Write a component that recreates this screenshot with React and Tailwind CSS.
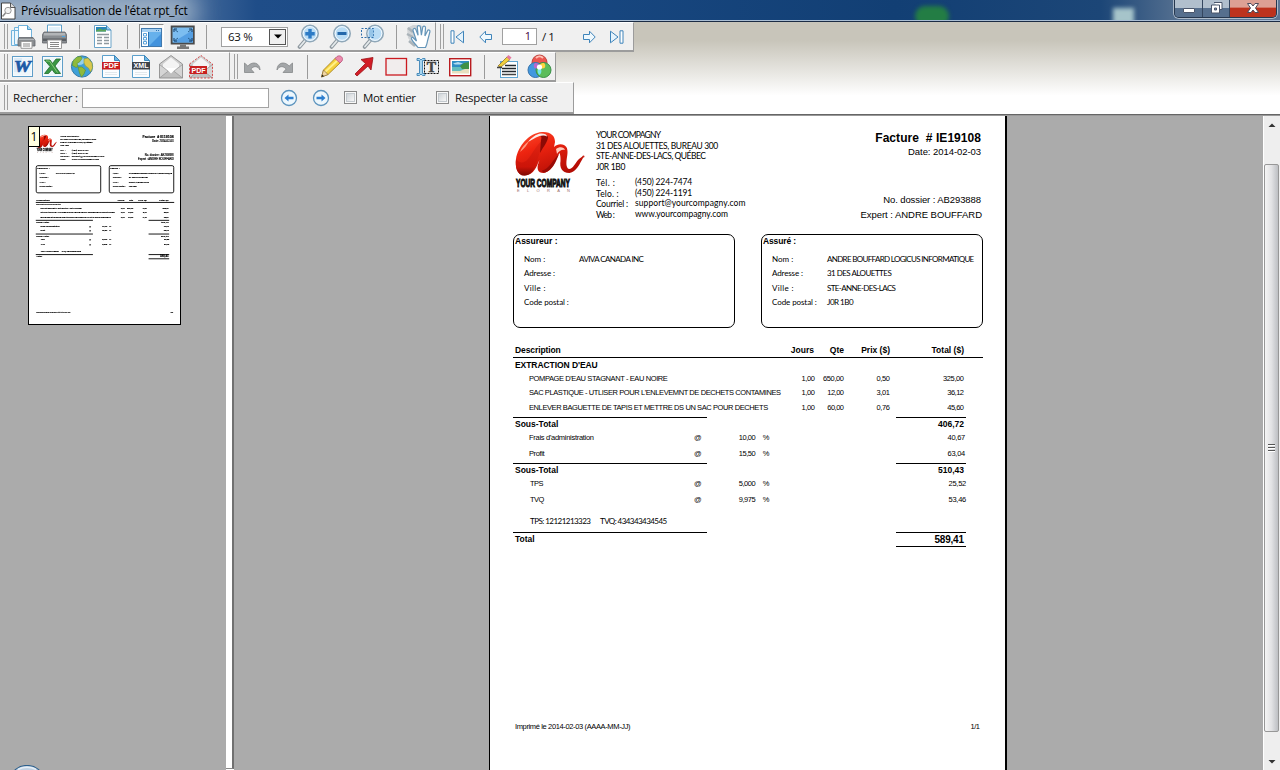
import { createContext, useContext, useLayoutEffect, useRef } from "react";

const ThumbContext = createContext(false);

/* Text tracked out (or in) to an exact run length, like the report engine does. */
function Fit({ w, children, className = "" }) {
  const ref = useRef(null);
  useLayoutEffect(() => {
    const el = ref.current;
    el.style.letterSpacing = "0px";
    const n = Math.max(1, children.length - 1);
    const ls = (w - el.offsetWidth) / n;
    el.style.letterSpacing = ls + "px";
    el.style.marginRight = -ls + "px";
  }, [w, children]);
  return (
    <span ref={ref} className={"inline-block shrink-0 whitespace-pre leading-none " + className}>
      {children}
    </span>
  );
}

/* ---------- toolbar parts ---------- */

function Toolbar({ className, children }) {
  return (
    <div className={"flex shrink-0 items-center border-b-2 border-r border-[#9c9c9c] border-t border-t-white bg-[#f0f0f0] " + className}>
      <div className="ml-1 mr-0.5 flex h-[25px] w-[4px] shrink-0 justify-between">
        <i className="w-px bg-[#a0a0a0]" />
        <i className="w-px bg-[#a0a0a0]" />
      </div>
      {children}
    </div>
  );
}

function Sep({ className }) {
  return <i className={"h-[24px] w-px shrink-0 bg-[#9a9a9a] " + className} />;
}

function Ico({ className = "", w = 26, children }) {
  return (
    <svg width={w} height="26" viewBox={`0 0 ${w} 26`} className={"shrink-0 " + className}>
      {children}
    </svg>
  );
}

function PrinterShape() {
  return (
    <g>
      <path d="M5.500 1h14v9h-14z" fill="#fff" stroke="#5d9fca" />
      <path d="M7 3h11v4H7z" fill="#e3f1fa" />
      <path d="M2 8h21l1.500 2.500V19H.5v-8.500z" fill="#8a8e92" stroke="#62666b" strokeWidth=".8" />
      <path d="M2 9h21v2.500H2z" fill="#b2b5b8" />
      <path d="M1 14.500h23V17H1z" fill="#5b5f64" />
      <path d="M5.500 16h14v8.500h-14z" fill="#fff" stroke="#9a9a9a" />
      <path d="M8 18.500h9M8 20.500h9M8 22.500h9" stroke="#888" />
      <path d="M20 12.500h3" stroke="#4ba5e2" />
    </g>
  );
}

function Lens({ children }) {
  return (
    <g>
      <path d="M8.500 16L2.500 23" stroke="#8d979e" strokeWidth="3.600" strokeLinecap="round" />
      <path d="M8.500 16L3 22.500" stroke="#e5eaec" strokeWidth="1.800" strokeLinecap="round" />
      <circle cx="13" cy="9.500" r="8.200" fill="#cfe6f7" stroke="#8fa7b8" strokeWidth="1.600" />
      <circle cx="13" cy="9.500" r="6.800" fill="#b9dcf5" stroke="#f3faff" strokeWidth="1" />
      {children}
    </g>
  );
}

function Doc({ label, band, className }) {
  return (
    <Ico w={20} className={className}>
      <path d="M1.500 1.500h12l5 5v17h-17z" fill="#fbfdff" stroke="#5a9fcb" />
      <path d="M13.500 1.500v5h5z" fill="#6db7e6" stroke="#3e87b9" />
      <path d="M4 18.500h12M4 20.500h12" stroke="#e1e8ec" />
      <rect x="1" y="8" width="18" height="7.500" fill={band} />
      <text x="10" y="14.300" textAnchor="middle" fontFamily="Liberation Sans, sans-serif" fontWeight="700" fontSize="7" textLength="15" lengthAdjust="spacingAndGlyphs" fill="#fff">{label}</text>
    </Ico>
  );
}

function Envelope({ pdf, className }) {
  const c = pdf ? "#d23a3a" : "#8f8f8f";
  return (
    <Ico className={className}>
      <path d="M1.500 10L13 1.500 24.500 10v14h-23z" fill="#cfcfcf" />
      <path d="M5 10L13 3.500 21 10v4l-8 5-8-5z" fill="#f4f4f4" />
      <path d="M1.500 10.500L10 17l-8.500 7zM24.500 10.500L16 17l8.500 7z" fill="#d5d5d5" />
      <path d="M1.500 24L11 16.500h4L24.500 24z" fill="#bfbfbf" />
      <path d="M1.500 24L11 16.500h4L24.500 24M1.500 10.500L10 17M24.500 10.500L16 17" fill="none" stroke="#9b9b9b" strokeWidth=".8" />
      <path d="M1.500 10L13 1.500 24.500 10v14h-23z" fill="none" stroke={c} strokeWidth=".9" strokeDasharray={pdf ? "2 1.500" : undefined} />
      {pdf ? (
        <>
          <rect x="2" y="12" width="17" height="8" fill="#c81f1f" />
          <text x="10.500" y="18.600" textAnchor="middle" fontFamily="Liberation Sans, sans-serif" fontWeight="700" fontSize="7" textLength="14" lengthAdjust="spacingAndGlyphs" fill="#fff">PDF</text>
        </>
      ) : (
        <path d="M9 14h8l2.500-1-6.500 6.500L6.500 13z" fill="#fff" />
      )}
    </Ico>
  );
}

function OfficeTile({ className, children }) {
  return (
    <Ico w={24} className={className}>
      <rect x="1.500" y="2.500" width="20" height="20" fill="#fff" stroke="#5f9ec8" />
      <rect x="2.500" y="3.500" width="18" height="18" fill="#eef6fb" />
      {children}
    </Ico>
  );
}

function RoundArrow({ flip, className }) {
  return (
    <svg width="18" height="18" viewBox="0 0 18 18" className={"shrink-0 " + (flip ? "-scale-x-100 " : "") + className}>
      <circle cx="9" cy="9" r="7.500" fill="#edf7fd" stroke="#5b93bd" strokeWidth="1.300" />
      <path d="M4.500 9L8.500 5.500v2.300h5v2.400h-5v2.300z" fill="#2d7fcf" />
    </svg>
  );
}

function BlockArrow({ flip, className }) {
  return (
    <svg width="14" height="14" viewBox="0 0 14 14" className={"shrink-0 " + (flip ? "-scale-x-100 " : "") + className}>
      <path d="M.8 7L6.500 1.200V4.500h6v5h-6v3.300z" fill="#eff8fd" stroke="#3f84ba" />
    </svg>
  );
}

function EndArrow({ flip, className }) {
  return (
    <svg width="15" height="14" viewBox="0 0 15 14" className={"shrink-0 " + (flip ? "-scale-x-100 " : "") + className}>
      <path d="M1 .8h3v12.400H1z" fill="#fff" stroke="#3f84ba" />
      <path d="M13.500 1.200v11.600L6 7z" fill="#e5f3fc" stroke="#3f84ba" />
    </svg>
  );
}

function Undo({ flip, className }) {
  return (
    <svg width="17" height="14" viewBox="0 0 17 14" className={"shrink-0 " + (flip ? "-scale-x-100 " : "") + className}>
      <path d="M.5 3v9.500H10L6.800 9C10 5.500 14 6 16 10 16 3 9 .5 3.800 6z" fill="#a3a6a8" stroke="#858889" strokeWidth=".8" />
    </svg>
  );
}

function CheckBox({ className }) {
  return (
    <div className={"h-[13px] w-[13px] shrink-0 border border-[#8a8a8a] bg-[#f8f8f8] p-px " + className}>
      <div className="h-full w-full border border-[#c3c9ce] bg-linear-to-br from-[#d0d5d9] to-[#f6f6f6]" />
    </div>
  );
}

/* ---------- title bar ---------- */

function TitleBar() {
  return (
    <div className="relative flex h-[22px] shrink-0 overflow-hidden border-b border-[#1b2c44] bg-[linear-gradient(90deg,#6e8bb0_0,#5a7ba6_12%,#1f4d88_20%,#1a4a85_35%,#123f74_70%,#1c4677_86%,#5d7694_93%,#5d7694_100%)]">
      <div className="absolute -left-5 -top-1 h-[30px] w-[215px] bg-[#a6b8cb] blur-md" />
      <div className="absolute left-[915px] top-[6px] h-5 w-[34px] rounded-full bg-[#237d44] blur-[2px]" />
      <div className="absolute left-[1113px] top-[8px] h-4 w-[21px] bg-[#a6c4ca] blur-[2px]" />
      <div className="absolute inset-x-0 bottom-0 h-px bg-[#a9bdd3]" />
      <svg width="17" height="19" viewBox="0 0 17 19" className="relative mt-0.5 shrink-0">
        <path d="M1.500 1h9l4.500 4.500V17H1.500z" fill="#fff" stroke="#333" strokeWidth=".9" />
        <path d="M10.500 1v4.500H15" fill="#ddd" stroke="#333" strokeWidth=".8" />
        <circle cx="8" cy="8.500" r="3.200" fill="#f2f2f2" stroke="#999" />
        <path d="M5.500 11L2.500 14.500" stroke="#888" strokeWidth="1.600" />
      </svg>
      <div className="relative ml-1 flex h-[21px] items-center font-['Open_Sans',sans-serif] text-[12px] text-black">
        <Fit w={167}>Prévisualisation de l'état rpt_fct</Fit>
      </div>
      <div className="relative ml-auto mr-[3px] flex h-[18px] overflow-hidden rounded-b-[5px] border border-t-0 border-[#26374e] ring-1 ring-white/50">
        <div className="flex w-[28px] items-end justify-center border-r border-[#34465f] bg-linear-to-b from-[#b1bfcd] from-45% to-[#566f8e] to-50% pb-[4px]">
          <i className="h-[5px] w-[12px] rounded-[1px] border border-[#4b566b] bg-white" />
        </div>
        <div className="flex w-[27px] justify-center border-r border-[#34465f] bg-linear-to-b from-[#b1bfcd] from-45% to-[#566f8e] to-50%">
          <svg width="13" height="14" viewBox="0 0 13 14" className="mt-px">
            <path d="M4 1.500h8v7h-2" fill="#fff" stroke="#4b566b" />
            <path d="M1.500 4h8v8h-8z" fill="#fff" stroke="#4b566b" />
            <path d="M4.500 7h2v2h-2z" fill="#8090ab" stroke="#4b566b" />
          </svg>
        </div>
        <div className="flex w-[46px] justify-center bg-linear-to-b from-[#dda094] from-40% to-[#bd321d] to-50%">
          <svg width="14" height="13" viewBox="0 0 14 13" className="mt-[2px]">
            <path d="M1.500 1.500h3.500l2 2.500 2-2.500h3.500L9.500 6l3 4.500H9L7 8l-2 2.500H1.500l3-4.500z" fill="#fff" stroke="#4d4a5b" />
          </svg>
        </div>
      </div>
    </div>
  );
}

/* ---------- toolbars ---------- */

function Toolbars() {
  return (
    <div className="flex h-[92px] shrink-0 flex-col bg-linear-to-b from-[#c8c5ba] from-20% to-white to-80% font-['Open_Sans',sans-serif] text-[11.500px] text-[#111]">
      <div className="flex h-[30px]">
        <Toolbar className="w-[436px]">
          <Ico>
            <path d="M1.500 6.500h7v15h-7zM4.500 3.500h8v17h-8z" fill="#edf7fd" stroke="#71b3dc" />
            <path d="M8.500 1.500h9l4 4v9h-13z" fill="#fff" stroke="#71b3dc" />
            <path d="M17.500 1.500v4h4" fill="#a7d6f2" stroke="#4e9ccc" />
            <path d="M9 13.500h14l2 3V22H8v-5.500z" fill="#888c90" stroke="#62666b" strokeWidth=".8" />
            <path d="M11 17.500h11v6.800H11z" fill="#fff" stroke="#999" />
            <path d="M13 20h7M13 22h7" stroke="#888" />
            <path d="M9 15.500h15" stroke="#b2b5b8" />
          </Ico>
          <Ico className="ml-[6px]"><PrinterShape /></Ico>
          <Sep className="ml-[11px]" />
          <Ico w={20} className="ml-[13px]">
            <path d="M1.500 1.500h12l4.500 4.500v17.500H1.500z" fill="#fff" stroke="#6ba3c8" />
            <rect x="3" y="3" width="10" height="4.500" fill="#2b86b8" />
            <path d="M3 6.500l4-2 3 1.500 3-1v2.500H3z" fill="#5da558" />
            <path d="M13.500 1.500V6H18" fill="#8cc8ee" stroke="#3e87b9" />
            <path d="M4 10.500h12M4 13.500h5M4 16.500h5M4 19.500h5M11 13.500h5M11 16.500h5M11 19.500h5" stroke="#8f999f" strokeWidth="1.500" />
          </Ico>
          <Sep className="ml-[14px]" />
          <div className="ml-[11px] flex h-[25px] w-[25px] shrink-0 items-center justify-center border border-b-white border-l-[#909090] border-r-white border-t-[#909090] bg-[#f8f8f8]">
            <svg width="21" height="19" viewBox="0 0 21 19" className="mt-px">
              <rect x=".5" y=".5" width="20" height="18" fill="#66b1ec" stroke="#4179ad" />
              <rect x="1" y="1" width="19" height="3" fill="#a5d0f2" />
              <path d="M15 2.500h4" stroke="#2d73b2" strokeDasharray="1 1" />
              <rect x="1" y="4" width="6" height="14" fill="#fff" />
              <path d="M2.500 5.500h3V8h-3zM2.500 9.500h3V12h-3zM2.500 13.500h3V16h-3z" fill="#fff" stroke="#5aa2da" />
              <path d="M7.500 4v14" stroke="#2d73b2" />
              <path d="M8 18L20 6v12z" fill="#4393dd" />
            </svg>
          </div>
          <Ico className="ml-[6px]">
            <rect x=".7" y="1.500" width="24" height="19" fill="#4a4a4a" />
            <rect x="2.500" y="3.500" width="20.500" height="15" fill="#7cbdf0" />
            <path d="M2.500 18.500L23 6v12.500z" fill="#559fe3" />
            <path d="M4 8V5h3M19 5h3v3M4 14v3h3M22 14v3h-3" fill="none" stroke="#143b63" />
            <path d="M4 5l4 3M22 5l-4 3M4 17l4-3M22 17l-4-3" stroke="#235886" strokeWidth=".9" />
            <path d="M10 20.500h6v2h3V25H7v-2.500h3z" fill="#777" />
          </Ico>
          <Sep className="ml-[10px]" />
          <div className="ml-[14px] flex h-[20px] w-[67px] shrink-0 items-center border border-[#a0a0a0] bg-white pl-[6px]">
            <Fit w={25} className="text-[11.500px]">63 %</Fit>
            <div className="ml-auto mr-px flex h-[16px] w-[17px] items-center justify-center border border-[#555] bg-[#efefef]">
              <svg width="8" height="5" viewBox="0 0 8 5"><path d="M0 .5h8l-4 4z" fill="#000" /></svg>
            </div>
          </div>
          <Ico w={24} className="ml-[9px]">
            <Lens><path d="M11.300 5h3.400v3h3v3.400h-3v3h-3.400v-3h-3V8h3z" fill="#2c7bc6" /></Lens>
          </Ico>
          <Ico w={24} className="ml-[8px]">
            <Lens><path d="M8.500 8h9v3h-9z" fill="#2468ab" /></Lens>
          </Ico>
          <Ico w={26} className="ml-[8px]">
            <g transform="translate(1 0)"><Lens /></g>
            <rect x=".5" y="4.500" width="12" height="9" fill="none" stroke="#2f6fac" strokeDasharray="2 1.500" />
            <rect x="7.500" y="5" width="5" height="8" fill="#7fb6e0" opacity=".6" />
          </Ico>
          <Sep className="ml-[9px]" />
          <Ico className="ml-[9px]">
            <path d="M1 4l6-3 7 0 4 2 4 16-8 5-5-2-7-8z" fill="#c3c8cc" opacity=".7" />
            <path d="M2 4l5 4M1 10l6 3M3 17l6 5" stroke="#aab3b9" strokeWidth="2.500" />
            <path d="M12 23.500c-2-3-5-5-6.500-8.500-.5-1.500 1-2 2-1l3 3L7 6.500c-.4-2.300 2.100-2.800 2.900-.9l2.200 5.700-.8-8c0-2.300 2.900-2.300 3.200 0l.9 7.800 1.300-7.600c.3-2.100 2.900-1.800 2.800.4l-.6 8 2.500-5c.9-1.900 3-.9 2.500 1L21.500 17c-.5 3-1 4.500-2 6.500z" fill="#fff" stroke="#6495b9" strokeWidth="1.200" />
          </Ico>
        </Toolbar>
        <Toolbar className="w-[198px]">
          <EndArrow className="ml-[4px]" />
          <BlockArrow className="ml-[14px]" />
          <div className="ml-[9px] flex h-[17px] w-[35px] shrink-0 items-center justify-end border border-[#a0a0a0] bg-white pr-[5px] text-[11px] text-[#400040]">1</div>
          <Fit w={13} className="ml-[5px] text-[11.500px]">/ 1</Fit>
          <BlockArrow flip className="ml-[27px]" />
          <EndArrow flip className="ml-[13px]" />
        </Toolbar>
      </div>
      <div className="flex h-[30px]">
        <Toolbar className="w-[230px]">
          <OfficeTile className="ml-px">
            <path d="M3 4h8v14H3z" fill="#dcebf7" />
            <text x="11.500" y="18" textAnchor="middle" fontFamily="Liberation Serif, serif" fontWeight="700" fontStyle="italic" fontSize="17" textLength="17" lengthAdjust="spacingAndGlyphs" fill="#1d5aa6" stroke="#1d5aa6" strokeWidth=".7">W</text>
          </OfficeTile>
          <OfficeTile className="ml-[6px]">
            <path d="M3.500 6h5.500l2.500 3.500L15 5h4.500l-5.500 7 5.500 7.500H14L11 15.500 7.500 19.500H3.500l5.500-7z" fill="#3a9743" stroke="#1e6b2b" strokeWidth=".8" />
            <path d="M5 7h3.500l8 11.500" fill="none" stroke="#8acb7b" />
          </OfficeTile>
          <Ico className="ml-[5px]">
            <circle cx="12" cy="12.500" r="10.600" fill="#3fa0d8" stroke="#357aa8" />
            <ellipse cx="9" cy="7" rx="6" ry="4" fill="#b9e4f5" opacity=".7" />
            <path d="M3 7l4-4 4-.5 1 2-2 3-3 2 1 3-2 1-3.500-2zM8 13l4 0 3.500 3-1.500 4-2.500 3-2-4z" fill="#8fba3c" stroke="#5a8f2b" strokeWidth=".6" />
            <path d="M14 5l4-1 4 5 .5 5-2 4-2-4-3-2-1.500-3z" fill="#d9c84f" stroke="#8ca138" strokeWidth=".6" />
          </Ico>
          <Doc label="PDF" band="#c81f1f" className="ml-[5px]" />
          <Doc label="XML" band="#3e4349" className="ml-[10px]" />
          <Envelope className="ml-[7px]" />
          <Envelope pdf className="ml-[4px]" />
        </Toolbar>
        <Toolbar className="w-[326px]">
          <Undo className="ml-[4px]" />
          <Undo flip className="ml-[15px]" />
          <Sep className="ml-[14px]" />
          <Ico w={24} className="ml-[12px]">
            <path d="M1.500 23l2-7L16 3.500l5 4.500L8 20.500z" fill="#f5d13d" stroke="#a98420" strokeWidth=".9" />
            <path d="M5 18L18 6" stroke="#fff08c" strokeWidth="1.800" />
            <path d="M3.500 16l4.500 4.500L1.500 23z" fill="#f0d6a4" stroke="#8b6d37" strokeWidth=".7" />
            <path d="M15 4.500l2-2c3-2 7 1 5 4.500l-2 2z" fill="#ec8aac" stroke="#b7577d" strokeWidth=".8" />
            <path d="M1.500 23l.8-2.500 1.700 1.700z" fill="#222" />
          </Ico>
          <Ico w={22} className="ml-[9px]">
            <path d="M2 20L12.500 9.500 8 5.500 20 3.500 18 16l-3-4L4 22z" fill="#d21e27" stroke="#9c1117" strokeWidth=".8" />
          </Ico>
          <Ico w={24} className="ml-[9px]">
            <rect x="2" y="4.500" width="20.500" height="16.500" fill="#f1eded" stroke="#cb1a20" strokeWidth="1.300" />
          </Ico>
          <Ico w={26} className="ml-[7px]">
            <path d="M2 4.500h2.500L6 6l1.500-1.500H10v2H7.500v13H10v2H7.500L6 20l-1.500 1.500H2v-2h2.500v-13H2z" fill="#a8d5ef" stroke="#3d85b6" strokeWidth=".9" />
            <rect x="9.500" y="6.500" width="14" height="13" fill="none" stroke="#111" strokeDasharray="2 1" />
            <text x="16.500" y="17.500" textAnchor="middle" fontFamily="Liberation Serif, serif" fontWeight="700" fontSize="14" fill="#444" stroke="#444" strokeWidth=".5">T</text>
          </Ico>
          <Ico w={24} className="ml-[7px]">
            <rect x="1.700" y="4.700" width="21" height="17" fill="#fff" stroke="#b91c20" strokeWidth="1.400" />
            <path d="M4 7h17v7H4z" fill="#2f8fc4" />
            <path d="M5 9.500l5-1.500 5 1.500-3 1H7z" fill="#b3ddf0" />
            <path d="M4 14h17v5.500H4z" fill="#e7dfbe" />
            <path d="M4 13h10l3 2-5 2H4z" fill="#61bdbd" />
            <path d="M12 12l4-3 5-1v7h-7z" fill="#3f9146" />
          </Ico>
          <Sep className="ml-[12px]" />
          <Ico className="ml-[11px]">
            <rect x="4.500" y="7.500" width="17" height="16" fill="#fff" stroke="#61a5d2" />
            <path d="M6 14.500h14M6 17.500h14M9 11.500h11" stroke="#252a2e" strokeWidth="1.700" />
            <path d="M6 20.500h14" stroke="#444" strokeWidth="1.500" />
            <path d="M2 12l9-9 3 2.500L5 13z" fill="#f1d03d" stroke="#907429" strokeWidth=".8" />
            <path d="M10.500 3l2-2 3 2.500L13.500 6z" fill="#e579a0" />
            <path d="M1 13.500h5" stroke="#444" strokeWidth="1.500" />
          </Ico>
          <Ico className="ml-[5px]">
            <circle cx="12.500" cy="8.500" r="7.500" fill="#ec5650" stroke="#bd453d" />
            <circle cx="8.500" cy="16" r="7.500" fill="#4298df" stroke="#3672aa" />
            <circle cx="16.500" cy="16" r="7.500" fill="#5bbd5b" stroke="#398f46" />
            <path d="M7.500 9.500c2-1 4 0 5 2.500-1 2-3 3-5 2-1-1-1-3 0-4.500z" fill="#b768cc" />
            <path d="M17.500 9.500c-2-1-4 0-5 2.500 1 2 3 3 5 2 1-1 1-3 0-4.500z" fill="#ffd440" />
            <path d="M12.500 21c-2.500-2-2.500-6 0-8 2.500 2 2.500 6 0 8z" fill="#75e7ea" />
            <circle cx="12.500" cy="13" r="2.600" fill="#fff" />
            <path d="M9 4c2-2 5-2 7 0" stroke="#ffc0b5" strokeWidth="2" fill="none" />
          </Ico>
        </Toolbar>
      </div>
      <Toolbar className="h-[32px] w-[574px]">
        <Fit w={65} className="ml-[3px]">Rechercher :</Fit>
        <div className="ml-[4px] h-[20px] w-[187px] shrink-0 border border-[#a3a3a3] bg-white" />
        <RoundArrow className="ml-[11px]" />
        <RoundArrow flip className="ml-[14px]" />
        <CheckBox className="ml-[14px]" />
        <Fit w={53} className="ml-[6px]">Mot entier</Fit>
        <CheckBox className="ml-[20px]" />
        <Fit w={93} className="ml-[6px]">Respecter la casse</Fit>
      </Toolbar>
    </div>
  );
}

/* ---------- invoice ---------- */

function Logo() {
  return (
    <svg width="74" height="68" viewBox="0 0 74 68" className="-ml-px mt-[14px] shrink-0 overflow-visible">
      <defs>
        <linearGradient id="ribbon" x1="0" y1="0" x2=".6" y2="1">
          <stop offset="0" stopColor="#ff5030" />
          <stop offset=".4" stopColor="#ee2410" />
          <stop offset="1" stopColor="#b30d05" />
        </linearGradient>
        <linearGradient id="leg" x1="0" y1="0" x2="0" y2="1">
          <stop offset="0" stopColor="#e02412" />
          <stop offset=".75" stopColor="#cc1408" />
          <stop offset="1" stopColor="#7c0703" />
        </linearGradient>
      </defs>
      <path d="M12 45.500C4 46 2 37 3 29 5 16 16 3 29 2c9-.5 13 4 13 10l-1 5c3-3 7-3.500 10-2 4 2 4 7 3 12-1 6-1 11 2 12 4 0 6-6 10-10l4-3 .5 1c-4 7-7 15-14 16-8 0-10-6-9-12 0-3 0-6-1-8-4 6-7 19-16 20-6 0-7-5-5-10l1-3c-3 6-5 15-15 15.500z" fill="url(#ribbon)" />
      <path d="M12 45.500C4 46 2 37 3 29c3 4 8 5 12 0 4-4 8-14 14-18-1 9-3 14-5 20-2 7-5 14-12 14.500z" fill="url(#leg)" />
      <path d="M28 10c1-3 0-5-3-5 5-1 9-1 10 2 0 4-4 9-8 16z" fill="#8c0a05" />
      <path d="M15 12c3-4 8-8 13-8.500 4 0 6 1 6 3-3-2-7-1-11 1z" fill="#fff" opacity=".9" />
      <path d="M43 19c3-2.500 8-2.500 9 1-3-1-6 1-8 4z" fill="#ffc9bb" />
      <path d="M46 24c-3 8-7 17-14 18.500-2 0-3-1-3-2 7-1 11-11 17-16.500z" fill="#990b05" />
      <path d="M7 22c2-5 5-8 9-11-2 4-5 8-9 11z" fill="#ff9a80" />
      <circle cx="70.500" cy="26.500" r="1" fill="#c92013" />
      <text x="3" y="57" fontFamily="Liberation Sans, sans-serif" fontWeight="700" fontSize="10" textLength="54" lengthAdjust="spacingAndGlyphs" fill="#111" stroke="#111" strokeWidth=".9">YOUR COMPANY</text>
      <text x="4" y="62" fontFamily="Liberation Sans, sans-serif" fontSize="4" textLength="53" fill="#9c6a66">ELORAN</text>
    </svg>
  );
}

function Rule({ className = "" }) {
  const thumb = useContext(ThumbContext);
  return (
    <div className={"flex h-px " + className}>
      <div className={"w-full shrink-0 bg-black " + (thumb ? "h-[3px]" : "h-px")} />
    </div>
  );
}

function SplitRule() {
  return (
    <div className="flex h-px">
      <Rule className="ml-[23px] w-[194px]" />
      <Rule className="ml-[189px] w-[70px]" />
    </div>
  );
}

function PartyBox({ title, tw, rows, className }) {
  const thumb = useContext(ThumbContext);
  return (
    <div className={"h-[94px] w-[222px] rounded-[7px] border-black font-['Lato','Open_Sans',sans-serif] text-[8px] " + (thumb ? "border-[3px] " : "border ") + className}>
      <div className="flex h-[13px] items-center pl-px font-['Liberation_Sans',sans-serif] text-[8.500px] font-bold">
        <Fit w={tw}>{title}</Fit>
      </div>
      {rows.map(([label, lw, value, vw], i) => (
        <div key={label} className={"flex items-center pl-[10px] " + (i === 0 ? "mt-[4px] h-[14px]" : "h-[14.600px]")}>
          <div className="flex w-[55px] shrink-0"><Fit w={lw}>{label}</Fit></div>
          {value && <Fit w={vw}>{value}</Fit>}
        </div>
      ))}
    </div>
  );
}

const items = [
  ["POMPAGE D'EAU STAGNANT - EAU NOIRE", 139, "1,00", "650,00", 21, "0,50", "325,00", 21, "h-[13px]"],
  ["SAC PLASTIQUE - UTLISER POUR L'ENLEVEMNT DE DECHETS CONTAMINES", 252, "1,00", "12,00", 17, "3,01", "36,12", 17, "h-[15px]"],
  ["ENLEVER BAGUETTE DE TAPIS ET METTRE DS UN SAC POUR DECHETS", 239, "1,00", "60,00", 17, "0,76", "45,60", 17, "h-[15px]"],
];

function Subtotal({ label, lw, amount, big }) {
  return (
    <div className="flex h-[13px] items-center pl-[25px] pr-[41px] text-[8.500px] font-bold">
      <Fit w={lw}>{label}</Fit>
      <div className="ml-auto flex"><Fit w={big ? 30 : 26} className={big ? "text-[10px]" : "text-[8.500px]"}>{amount}</Fit></div>
    </div>
  );
}

function Charge({ label, lw, rate, amount, className, tax }) {
  return (
    <div className={"flex items-center " + (tax ? "pl-[40px] " : "pl-[39px] ") + className}>
      <div className={"flex shrink-0 " + (tax ? "w-[164px]" : "w-[165px]")}><Fit w={lw}>{label}</Fit></div>
      <Fit w={7}>@</Fit>
      <div className="flex w-[54px] shrink-0 justify-end"><Fit w={17}>{rate}</Fit></div>
      <Fit w={6} className="ml-[7px]">%</Fit>
      <div className={"flex shrink-0 justify-end " + (tax ? "w-[197px]" : "w-[196px]")}><Fit w={18}>{amount}</Fit></div>
    </div>
  );
}

function Invoice() {
  return (
    <div className="h-[654px] w-[515px] font-['Liberation_Sans',sans-serif] text-[7.500px] text-black">
      <div className="flex h-[118px]">
        <div className="w-[106px] shrink-0 pl-[24px]"><Logo /></div>
        <div className="w-[170px] shrink-0 pt-[14px] font-['Lato','Open_Sans',sans-serif] text-[8.500px]">
          {[["YOUR COMPAGNY", 65], ["31 DES ALOUETTES, BUREAU 300", 122], ["STE-ANNE-DES-LACS, QUÉBEC", 110], ["J0R 1B0", 29]].map(([t, w]) => (
            <div key={t} className="flex h-[10.700px] items-center"><Fit w={w}>{t}</Fit></div>
          ))}
          <div className="mt-[4px] flex">
            <div className="w-[39px] shrink-0 pt-px">
              {[["Tél. :", 19], ["Telo. :", 23], ["Courriel :", 32], ["Web :", 19]].map(([t, w]) => (
                <div key={t} className="flex h-[10.800px] items-center"><Fit w={w}>{t}</Fit></div>
              ))}
            </div>
            <div>
              {[["(450) 224-7474", 57], ["(450) 224-1191", 57], ["support@yourcompagny.com", 110], ["www.yourcompagny.com", 93]].map(([t, w]) => (
                <div key={t} className="flex h-[10.700px] items-center text-[8.500px]"><Fit w={w}>{t}</Fit></div>
              ))}
            </div>
          </div>
        </div>
        <div className="flex flex-1 flex-col items-end pr-[24px] pt-[14px] text-[9.500px]">
          <div className="flex h-[16px] items-center font-['Liberation_Sans',sans-serif] text-[12px] font-bold"><Fit w={106}>{"Facture  # IE19108"}</Fit></div>
          <div className="flex h-[12px] items-center"><Fit w={73}>Date: 2014-02-03</Fit></div>
          <div className="mt-[35px] flex h-[14px] items-center"><Fit w={98}>No. dossier : AB293888</Fit></div>
          <div className="-mr-px flex h-[15px] items-center"><Fit w={121}>Expert : ANDRE BOUFFARD</Fit></div>
        </div>
      </div>
      <div className="flex">
        <PartyBox className="ml-[23px]" title="Assureur :" tw={43} rows={[["Nom :", 21, "AVIVA CANADA INC", 65], ["Adresse :", 31], ["Ville :", 21], ["Code postal :", 45]]} />
        <PartyBox className="ml-[26px]" title="Assuré :" tw={33} rows={[["Nom :", 21, "ANDRE BOUFFARD LOGICUS INFORMATIQUE", 147], ["Adresse :", 31, "31 DES ALOUETTES", 65], ["Ville :", 21, "STE-ANNE-DES-LACS", 69], ["Code postal :", 45, "J0R 1B0", 27]]} />
      </div>
      <div className="mt-[15px] flex h-[14px] items-center pl-[25px] text-[8.500px] font-bold">
        <div className="flex w-[253px] shrink-0"><Fit w={46}>Description</Fit></div>
        <div className="flex w-[46px] shrink-0 justify-end"><Fit w={23}>Jours</Fit></div>
        <div className="flex w-[30px] shrink-0 justify-end"><Fit w={14}>Qte</Fit></div>
        <div className="flex w-[46px] shrink-0 justify-end"><Fit w={29}>Prix ($)</Fit></div>
        <div className="flex w-[74px] shrink-0 justify-end"><Fit w={32}>Total ($)</Fit></div>
      </div>
      <Rule className="ml-[23px] w-[470px]" />
      <div className="flex h-[14px] items-center pl-[25px] text-[8.500px] font-bold"><Fit w={83}>EXTRACTION D'EAU</Fit></div>
      {items.map(([d, dw, j, q, qw, p, t, tw, h]) => (
        <div key={d} className={"flex items-center pl-[39px] " + h}>
          <div className="flex w-[256px] shrink-0"><Fit w={dw}>{d}</Fit></div>
          <div className="flex w-[30px] shrink-0 justify-end"><Fit w={14}>{j}</Fit></div>
          <div className="flex w-[29px] shrink-0 justify-end pt-px"><Fit w={qw}>{q}</Fit></div>
          <div className="flex w-[46px] shrink-0 justify-end"><Fit w={14}>{p}</Fit></div>
          <div className="flex w-[74px] shrink-0 justify-end"><Fit w={tw}>{t}</Fit></div>
        </div>
      ))}
      <div className="h-[2px]" />
      <SplitRule />
      <Subtotal label="Sous-Total" lw={43} amount="406,72" />
      <Charge className="h-[14px]" label="Frais d'administration" lw={65} rate="10,00" amount="40,67" />
      <Charge className="mb-px h-[17px]" label="Profit" lw={16} rate="15,50" amount="63,04" />
      <SplitRule />
      <Subtotal label="Sous-Total" lw={43} amount="510,43" />
      <Charge tax className="h-[14px]" label="TPS" lw={14} rate="5,000" amount="25,52" />
      <Charge tax className="h-[17px]" label="TVQ" lw={14} rate="9,975" amount="53,46" />
      <div className="flex h-[24px] items-center pl-[40px] pt-px font-['Lato','Open_Sans',sans-serif] text-[8px]">
        <div className="flex w-[70px] shrink-0"><Fit w={61}>TPS: 12121213323</Fit></div>
        <Fit w={67}>TVQ: 434343434545</Fit>
      </div>
      <SplitRule />
      <Subtotal label="Total" lw={20} amount="589,41" big />
      <Rule className="ml-[406px] w-[70px]" />
      <div className="mt-[174px] flex h-[12px] items-center justify-between pl-[25px] pr-[25px]">
        <Fit w={116}>Imprimé le 2014-02-03 (AAAA-MM-JJ)</Fit>
        <Fit w={9}>1/1</Fit>
      </div>
    </div>
  );
}

/* ---------- body ---------- */

function ThumbnailPane() {
  return (
    <div className="flex w-[226px] shrink-0 flex-col justify-between overflow-hidden bg-[#ababab]">
      <div className="relative ml-[28px] mt-[10px] h-[199px] w-[153px] overflow-hidden border border-black bg-white pt-[3px]">
        <div className="h-[195px] w-[151px] overflow-hidden">
          <ThumbContext.Provider value={true}>
            <div className="w-[515px] origin-top-left scale-x-[0.2945] scale-y-[0.2985] [-webkit-text-stroke:0.5px_black]">
              <Invoice />
            </div>
          </ThumbContext.Provider>
        </div>
        <div className="absolute left-0 top-0 flex h-[20px] w-[11px] items-center justify-center border-b border-r border-black bg-[#ffffe1] font-['Open_Sans',sans-serif] text-[12px] leading-none">1</div>
      </div>
      <svg width="30" height="5" viewBox="0 0 30 5" className="ml-[12px] shrink-0">
        <ellipse cx="15" cy="12" rx="15" ry="11.500" fill="#bfd0e2" stroke="#2c5f8c" strokeWidth="1.200" />
        <path d="M6 4.500c5-3 13-3 18 0" stroke="#e5eef6" strokeWidth="1.500" fill="none" />
      </svg>
    </div>
  );
}

function ScrollBar() {
  return (
    <div className="flex w-[17px] shrink-0 flex-col border-l border-white bg-[#eeeeee]">
      <svg width="16" height="48" viewBox="0 0 16 48" className="shrink-0"><path d="M4.500 11L8 7.500 11.500 11z" fill="#333" /></svg>
      <div className="mr-px flex h-[568px] items-center justify-center rounded-[2px] border border-[#979797] bg-linear-to-r from-[#f5f5f5] via-[#e2e2e4] via-50% to-[#bdbfc3]">
        <div className="flex h-[8px] w-[7px] flex-col justify-between">
          <i className="h-[2px] border-t border-[#555] bg-white" />
          <i className="h-[2px] border-t border-[#555] bg-white" />
          <i className="h-[2px] border-t border-[#555] bg-white" />
        </div>
      </div>
      <svg width="16" height="38" viewBox="0 0 16 38" className="shrink-0"><path d="M4.500 28h7L8 31.500z" fill="#333" /></svg>
    </div>
  );
}

export default function App() {
  return (
    <div className="flex h-[770px] w-[1280px] flex-col overflow-hidden bg-white">
      <TitleBar />
      <Toolbars />
      <div className="h-[2px] shrink-0 border-t border-[#666] bg-[#999]" />
      <div className="flex h-[654px] overflow-hidden">
        <ThumbnailPane />
        <div className="mb-px w-[8px] shrink-0 border-b border-r-2 border-b-[#888] border-r-[#707070] bg-white" />
        <div className="flex flex-1 bg-[#ababab]">
          <div className="ml-[255px] box-content w-[515px] border-l border-r-2 border-black bg-white">
            <Invoice />
          </div>
        </div>
        <ScrollBar />
      </div>
    </div>
  );
}
